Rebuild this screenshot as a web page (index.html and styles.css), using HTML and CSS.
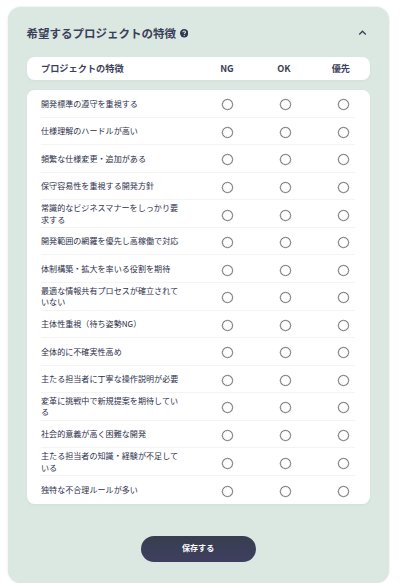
FILE: index.html
```
<!DOCTYPE html>
<html lang="ja">
<head>
    <meta charset="UTF-8">
    <meta name="viewport" content="width=device-width, initial-scale=1.0">
    <title>希望するプロジェクトの特徴</title>
    <link rel="stylesheet" href="styles.css">
</head>
<body>
    <form class="card">
        <div class="card-header">
            <h2>希望するプロジェクトの特徴</h2>
            <svg class="help-icon" viewBox="0 0 16 16">
                <circle cx="8" cy="8" r="8" fill="#333650"/>
                <path d="M5.4 6.200C5.500 4.700 6.600 4 8 4c1.500 0 2.500.8 2.500 2.100C10.500 7.700 8.100 7.700 8.100 9.600" fill="none" stroke="#dae8e1" stroke-width="2"/>
                <circle cx="8.100" cy="12" r="1.250" fill="#dae8e1"/>
            </svg>
            <svg class="chevron" viewBox="0 0 8 6">
                <path d="M1.100 4.700L4 1.800l2.900 2.900" fill="none" stroke="#3c3f59" stroke-width="1.200"/>
            </svg>
        </div>

        <div class="table-head">
            <span class="name">プロジェクトの特徴</span>
            <span>NG</span>
            <span>OK</span>
            <span>優先</span>
        </div>

        <div class="table-body" id="feature-list"></div>

        <button type="submit" class="save">保存する</button>
    </form>

    <script>
        const features = [
            '開発標準の遵守を重視する',
            '仕様理解のハードルが高い',
            '頻繁な仕様変更・追加がある',
            '保守容易性を重視する開発方針',
            '常識的なビジネスマナーをしっかり要求する',
            '開発範囲の網羅を優先し高稼働で対応',
            '体制構築・拡大を率いる役割を期待',
            '最適な情報共有プロセスが確立されていない',
            '主体性重視（待ち姿勢NG）',
            '全体的に不確実性高め',
            '主たる担当者に丁寧な操作説明が必要',
            '変革に挑戦中で新規提案を期待している',
            '社会的意義が高く困難な開発',
            '主たる担当者の知識・経験が不足している',
            '独特な不合理ルールが多い'
        ];

        const list = document.getElementById('feature-list');

        features.forEach((feature, i) => {
            const row = document.createElement('div');
            row.className = 'row';
            row.innerHTML = `
                <span class="name">${feature}</span>
                <input type="radio" name="feature-${i}" value="ng" aria-label="NG">
                <input type="radio" name="feature-${i}" value="ok" aria-label="OK">
                <input type="radio" name="feature-${i}" value="priority" aria-label="優先">
            `;
            list.appendChild(row);
        });
    </script>
</body>
</html>
```
FILE: styles.css
```
* {
    box-sizing: border-box;
}
body {
    margin: 0;
    padding: 6.5px 11.4px 0 7.6px;
    background-color: #fff;
    color: #3c3f59;
    font-family: "Noto Sans CJK JP", sans-serif;
}
.card {
    height: 576px;
    padding: 15px 19px 0;
    background-color: #dae8e1;
    border-radius: 13px;
    box-shadow: 0 0 2px rgba(0, 0, 0, 0.15);
}
.card-header {
    display: flex;
    align-items: center;
    height: 23px;
    margin-bottom: 12.5px;
}
h2 {
    margin: 0;
    font-size: 11.5px;
    line-height: 23px;
    font-weight: bold;
}
.help-icon {
    width: 8.4px;
    height: 8.4px;
    margin: 1px 0 0 4px;
}
.chevron {
    width: 9px;
    height: 7px;
    margin: 0 2.5px 1px auto;
}
.table-head,
.table-body {
    background-color: #fff;
    border-radius: 7.5px;
    box-shadow: 0 1px 3px rgba(60, 80, 70, 0.05);
}
.table-head,
.row {
    display: grid;
    align-items: center;
}
.table-head {
    grid-template-columns: 157.4px 57px 57px 57px;
    justify-items: center;
    height: 23px;
    margin-bottom: 10px;
    padding-left: 14.4px;
    font-size: 9.2px;
    line-height: 23px;
    font-weight: bold;
}
.table-head .name {
    justify-self: start;
}
.table-body {
    height: 413.5px;
    padding: 0 14.4px;
}
.row {
    grid-template-columns: 181.4px 57.6px 57.6px 1fr;
    height: 27.57px;
    border-bottom: 1px solid #f4f4f4;
    color: #2c2f4a;
    font-size: 8.08px;
    line-height: 11.5px;
}
.row:last-child {
    border-bottom: none;
}
.row .name {
    width: 140px;
}
.row input {
    appearance: none;
    width: 11px;
    height: 11px;
    margin: 3px 0 0;
    border: 1px solid #767676;
    border-radius: 50%;
    box-shadow: 0 0 0 0.25px #767676;
}
.row input:checked {
    background: radial-gradient(#3c3f59 45%, #fff 50%);
}
.save {
    display: block;
    width: 115px;
    height: 26px;
    margin: 32px auto 0;
    padding: 0 0 2px;
    border: none;
    border-radius: 13px;
    background: linear-gradient(#383e50, #3f3f5f);
    color: #fff;
    font-family: inherit;
    font-size: 8.08px;
    font-weight: bold;
    cursor: pointer;
}
```
